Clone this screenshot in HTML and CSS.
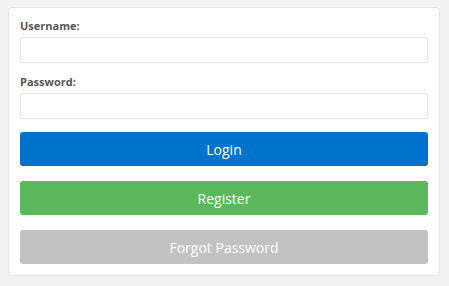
FILE: index.html
```html
<!DOCTYPE html>
<html lang="en">
<head>
    <meta charset="UTF-8">
    <meta name="viewport" content="width=device-width, initial-scale=1.0">
    <title>Login</title>
    <link rel="stylesheet" href="styles.css">
</head>
<body>
    <div class="login-box">
        <form class="login-form">
            <label for="username">Username:</label>
            <input type="text" id="username" name="username">

            <label for="password">Password:</label>
            <input type="password" id="password" name="password">

            <button type="button" class="btn btn-login">Login</button>
            <button type="button" class="btn btn-register">Register</button>
            <button type="button" class="btn btn-forgot">Forgot Password</button>
        </form>
    </div>
</body>
</html>
```

FILE: styles.css
```css
body {
    font-family: 'Open Sans', sans-serif;
    margin: 7px 9px 0 8px;
    padding: 0;
    background: #f2f2f2;
}

.login-box {
    background: #fff;
    border: 1px solid #e4e4e4;
    border-radius: 4px;
    box-shadow: 0 1px 2px rgba(0, 0, 0, 0.04);
    padding: 10px 11px 11px;
}

.login-form {
    display: flex;
    flex-direction: column;
}

.login-form label {
    font-size: 11px;
    font-weight: bold;
    color: #555;
    line-height: 16px;
    margin-bottom: 3px;
}

.login-form input {
    height: 26px;
    box-sizing: border-box;
    border: 1px solid #e6e6e6;
    border-radius: 2px;
    padding: 0 6px;
    margin: 0 0 11px;
    font-family: inherit;
    font-size: 13px;
}

#password {
    margin-bottom: 13px;
}

.btn {
    height: 34px;
    border: none;
    border-radius: 3px;
    color: white;
    font-family: inherit;
    font-size: 14px;
    margin-bottom: 15px;
    cursor: pointer;
}

.btn:last-child {
    margin-bottom: 0;
}

.btn-login {
    background-color: #0074cc;
}

.btn-register {
    background-color: #5cb85c;
}

.btn-forgot {
    background-color: #c2c2c2;
}
```
